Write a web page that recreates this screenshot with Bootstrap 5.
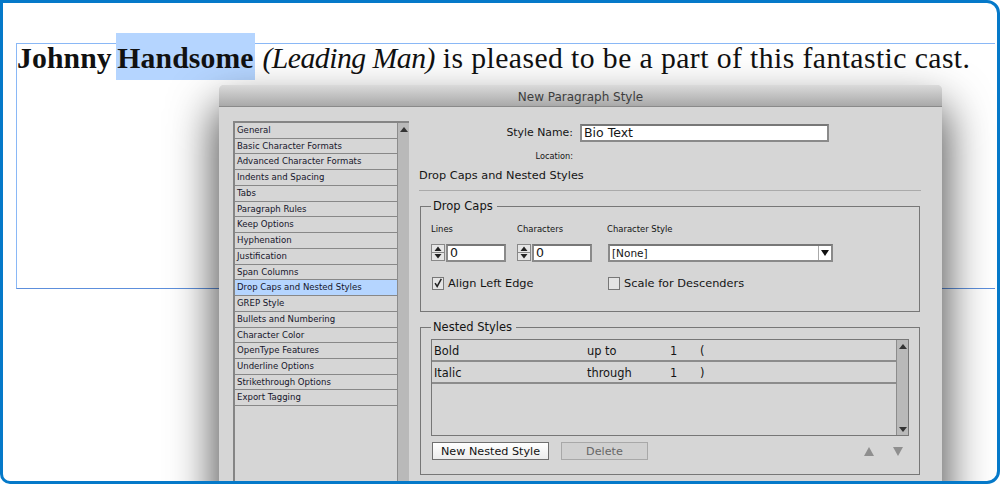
<!DOCTYPE html>
<html lang="en">
<head>
<meta charset="utf-8">
<title>New Paragraph Style</title>
<link href="https://cdn.jsdelivr.net/npm/bootstrap@5.3.0/dist/css/bootstrap.min.css" rel="stylesheet">
<style>
html,body{margin:0;height:484px;overflow:hidden;background:#fff}
.shot{position:relative;width:1000px;height:484px;overflow:hidden;background:#fff;border:3px solid #0579c9;border-radius:0 13px 13px 10px}
.frame{position:absolute;left:13px;top:40px;width:979px;height:246px;border:1px solid #8ab8f6;border-right:0;border-bottom-color:#5d8fdc}
.copy{position:absolute;left:14px;top:30px;font:29.7px/50px "Liberation Serif",serif;letter-spacing:.42px;color:#111;white-space:nowrap}
.copy b{font-weight:700;word-spacing:-3px;letter-spacing:.12px}
.copy em{letter-spacing:-.49px}
.sel{background:#b5d5ff;display:inline-block;height:47px;line-height:50px;padding:0 1px}
.dlg{position:absolute;left:216px;top:82px;width:723px;height:420px;background:#d6d6d6;border-radius:5px 5px 0 0;box-shadow:0 25px 45px 4px rgba(0,0,0,.7);font-family:"DejaVu Sans",sans-serif;color:#141414}
.dlg-title{height:22px;background:linear-gradient(#dadada,#a9a9a9);border-bottom:1px solid #8a8a8a;border-radius:5px 5px 0 0;text-align:center;font-size:12px;line-height:25px;color:#3d3d3d}
.dlg-body{padding:14px 21px 0 14px;gap:10px;background:#d6d6d6}
.side{width:176px;height:380px;border:2px solid #858585;flex:none}
.side .items{width:162px;flex:none;padding:0}
.side .it{height:15.74px;line-height:14px;font-size:8.55px;padding-left:2px;border-bottom:1px solid #888;color:#15152a;white-space:nowrap}
.side .it.on{background:#b5d5ff}
.bar{flex:none;width:12px;background:#b9b9b9;border-left:1px solid #8c8c8c;position:relative}
.bar i{position:absolute;left:2px;width:0;height:0;border-left:4px solid transparent;border-right:4px solid transparent}
.bar .up{top:4px;border-bottom:5px solid #333}
.bar .dn{bottom:3px;border-top:5px solid #333}
.main{width:502px;flex:none}
.name{height:18px;margin:3px 0 0;font-size:10.9px}
.lab-r{width:154px;text-align:right;flex:none}
.box{background:#fff;border:2px solid #8a8a8a;border-top-color:#777;height:18px;line-height:13px;padding-left:2px;font-size:12.5px}
.box-name{width:249px;margin-left:7px}
.loc{margin-top:9px;height:11px;line-height:11px}
.loc .lab-r{font-size:8.2px}
.h-sec{margin:6px 0 0;line-height:16px;border-bottom:1px solid #aaa;font-size:11.3px;padding-bottom:4px;height:23px}
fieldset.grp{border:1px solid #777;margin:0 1px 0 1px;width:500px;padding:0 10px;position:relative}
fieldset.grp legend{float:none;width:auto;margin:0;padding:0 4px 0 2px;font-size:11.5px;line-height:13px;color:#141414}
.g1{height:112px;margin-top:9px!important}
.g2{height:154px;margin-top:9px!important}
.heads{margin-top:10px;font-size:8.45px}
.sp{width:14px;height:17px;flex:none;margin-right:1px}
.inp{width:60px;flex:none}
.fld{width:86px;flex:none}
.fld-w{width:90px;flex:none}
.sel-box{width:225px;margin-left:1px;position:relative;height:18px;font-size:10.5px;line-height:14px}
.sel-box::after{content:"";position:absolute;right:2px;top:4px;border-left:4px solid transparent;border-right:4px solid transparent;border-top:6px solid #111}
.sel-box::before{content:"";position:absolute;right:12px;top:0;height:14px;border-left:1px solid #aaa}
.checks{margin-top:13px;margin-left:1px;font-size:11.35px}
.chk1{width:176px;flex:none}
.cb{width:12px;height:13px;background:#e4e4e4;border:1px solid #777;flex:none;margin-right:4px}
.nest{height:97px;border:1px solid #777;margin-top:5px}
.nest .rows{flex:1}
.row-n{height:22px;border-bottom:2px solid #8c8c8c;font-size:11.4px;line-height:23px;padding-left:2px}
.c1{width:153px}.c2{width:83px}.c3{width:30px}
.acts{margin-top:6px;margin-left:1px}
.btn.mac{border-radius:0;height:18px;padding:0;font-size:11.2px;line-height:15px;color:#111;background:linear-gradient(#fff,#ececec);border:1px solid #6f6f6f;box-shadow:none;--bs-btn-hover-bg:#fff;width:117px}
.btn.mac.off{background:#d0d0d0;color:#666;border-color:#a8a8a8;opacity:1;width:87px;margin-left:12px}
.arrow{width:0;height:0;border-left:5px solid transparent;border-right:5px solid transparent}
.arrow.a{border-bottom:9px solid #8f8f8f;margin-right:19px}
.arrow.b{border-top:9px solid #8f8f8f;margin-right:6px}
</style>
</head>
<body>
<div class="shot">
  <div class="frame"></div>
  <div class="copy"><b>Johnny <span class="sel">Handsome</span></b> <em>(Leading Man)</em> is pleased to be a part of this fantastic cast.</div>
  <div class="dlg">
    <div class="dlg-title">New Paragraph Style</div>
    <div class="dlg-body d-flex">
      <div class="side d-flex">
        <div class="items flex-grow-1">
          <div class="it">General</div>
          <div class="it">Basic Character Formats</div>
          <div class="it">Advanced Character Formats</div>
          <div class="it">Indents and Spacing</div>
          <div class="it">Tabs</div>
          <div class="it">Paragraph Rules</div>
          <div class="it">Keep Options</div>
          <div class="it">Hyphenation</div>
          <div class="it">Justification</div>
          <div class="it">Span Columns</div>
          <div class="it on">Drop Caps and Nested Styles</div>
          <div class="it">GREP Style</div>
          <div class="it">Bullets and Numbering</div>
          <div class="it">Character Color</div>
          <div class="it">OpenType Features</div>
          <div class="it">Underline Options</div>
          <div class="it">Strikethrough Options</div>
          <div class="it">Export Tagging</div>
        </div>
        <div class="bar"><i class="up"></i></div>
      </div>
      <div class="main">
        <div class="name d-flex align-items-center">
          <div class="lab-r">Style Name:</div>
          <div class="box box-name">Bio Text</div>
        </div>
        <div class="loc d-flex"><div class="lab-r">Location:</div></div>
        <div class="h-sec">Drop Caps and Nested Styles</div>
        <fieldset class="grp g1">
          <legend>Drop Caps</legend>
          <div class="d-flex heads"><div class="fld">Lines</div><div class="fld-w">Characters</div><div>Character Style</div></div>
          <div class="d-flex mt-2 align-items-center">
            <div class="d-flex fld">
              <svg class="sp" viewBox="0 0 14 17"><rect x=".5" y=".5" width="13" height="16" fill="#e6e6e6" stroke="#888"/><path d="M1 8.500h12" stroke="#888"/><path d="M7 2.500l3.500 4.500h-7zM7 14.500l3.500-4.500h-7z" fill="#222"/></svg>
              <div class="box inp">0</div>
            </div>
            <div class="d-flex fld-w">
              <svg class="sp" viewBox="0 0 14 17"><rect x=".5" y=".5" width="13" height="16" fill="#e6e6e6" stroke="#888"/><path d="M1 8.500h12" stroke="#888"/><path d="M7 2.500l3.500 4.500h-7zM7 14.500l3.500-4.500h-7z" fill="#222"/></svg>
              <div class="box inp">0</div>
            </div>
            <div class="box sel-box">[None]</div>
          </div>
          <div class="d-flex checks align-items-center">
            <div class="d-flex align-items-center chk1">
              <svg class="cb" viewBox="0 0 12 13"><path d="M2.500 6l2.500 4 5-9" fill="none" stroke="#222" stroke-width="1.800"/></svg>
              <span>Align Left Edge</span>
            </div>
            <div class="d-flex align-items-center">
              <span class="cb"></span><span>Scale for Descenders</span>
            </div>
          </div>
        </fieldset>
        <fieldset class="grp g2">
          <legend>Nested Styles</legend>
          <div class="nest d-flex">
            <div class="rows">
              <div class="row-n d-flex"><div class="c1">Bold</div><div class="c2">up to</div><div class="c3">1</div><div>(</div></div>
              <div class="row-n d-flex"><div class="c1">Italic</div><div class="c2">through</div><div class="c3">1</div><div>)</div></div>
            </div>
            <div class="bar"><i class="up"></i><i class="dn"></i></div>
          </div>
          <div class="d-flex align-items-center acts">
            <button type="button" class="btn mac">New Nested Style</button>
            <button type="button" class="btn mac off">Delete</button>
            <div class="arrow a ms-auto"></div>
            <div class="arrow b"></div>
          </div>
        </fieldset>
      </div>
    </div>
  </div>
</div>
</body>
</html>
